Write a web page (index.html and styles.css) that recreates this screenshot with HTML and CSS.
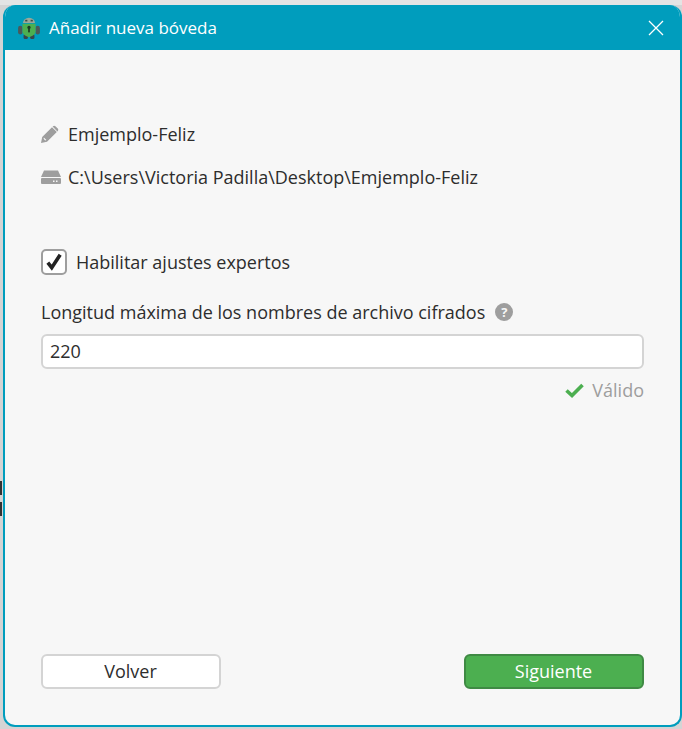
FILE: index.html
```html
<!DOCTYPE html>
<html lang="es">
<head>
  <meta charset="UTF-8" />
  <title>Añadir nueva bóveda</title>
  <link rel="stylesheet" href="styles.css">
</head>
<body>
  <div class="behind-a"></div>
  <div class="behind-b"></div>

  <div class="window">
    <div class="titlebar">
      <svg class="logo" width="24" height="24" viewBox="0 0 22 22">
        <rect x="1" y="9" width="4" height="8" rx="2" fill="#4a5a5a" />
        <rect x="17" y="9" width="4" height="8" rx="2" fill="#4a5a5a" />
        <rect x="6" y="17" width="4" height="4" rx="1" fill="#37474a" />
        <rect x="12" y="17" width="4" height="4" rx="1" fill="#37474a" />
        <path d="M5.500 6.500a5.500 5 0 0 1 11 0z" fill="#9aa89a" />
        <rect x="7.500" y="3.500" width="2" height="1.500" fill="#3d4d45" />
        <rect x="12.500" y="3.500" width="2" height="1.500" fill="#3d4d45" />
        <path d="M5 7h12v7c0 3-3 4.500-6 5.500-3-1-6-2.500-6-5.500z" fill="#4caf50" />
        <circle cx="11" cy="10.500" r="1.500" fill="#1d3b24" />
        <rect x="10.200" y="11" width="1.600" height="4" fill="#1d3b24" />
      </svg>
      <span class="title">Añadir nueva bóveda</span>
      <svg class="close" width="16" height="16" viewBox="0 0 16 16">
        <path d="M1 1l14 14M15 1L1 15" stroke="#fff" stroke-width="1.300" fill="none" />
      </svg>
    </div>

    <div class="content">
      <div class="info-row name-row">
        <svg width="18" height="18" viewBox="0 0 18 18">
          <path fill-rule="evenodd" d="M0 18l1.200-6L11 2.200 15.800 7 6 16.800z M2.600 13.800l1.600 1.600 1.200-.3-2.500-2.500z M12 1.200a1.800 1.800 0 0 1 2.400 0l2.400 2.400a1.800 1.800 0 0 1 0 2.400l-.4.4-4.800-4.800z" fill="#9e9e9e" />
        </svg>
        <span>Emjemplo-Feliz</span>
      </div>
      <div class="info-row path-row">
        <svg width="22" height="18" viewBox="1 0 22 18">
          <path d="M1 9l3-6.500h14l3 6.500z" fill="#9e9e9e" />
          <path fill-rule="evenodd" d="M2 10h18a1 1 0 0 1 1 1v4a1 1 0 0 1-1 1H2a1 1 0 0 1-1-1v-4a1 1 0 0 1 1-1z M13 12.500h1.500v1.500H13z M16 12.500h1.500v1.500H16z" fill="#9e9e9e" />
        </svg>
        <span>C:\Users\Victoria Padilla\Desktop\Emjemplo-Feliz</span>
      </div>

      <label class="expert">
        <span class="checkbox">
          <svg width="18" height="18" viewBox="0 0 16 16">
            <path d="M2.500 8.500l3.500 4.500 7.500-11.500" stroke="#222" stroke-width="3.200" fill="none" />
          </svg>
        </span>
        Habilitar ajustes expertos
      </label>

      <div class="field-label">
        <span>Longitud máxima de los nombres de archivo cifrados</span>
        <span class="help">?</span>
      </div>
      <input class="field" type="text" value="220">
      <div class="valid">
        <svg width="19" height="15" viewBox="0 0 19 15">
          <path d="M1.500 7.500l5.500 5 10.500-10.500" stroke="#4caf50" stroke-width="3.600" fill="none" />
        </svg>
        <span>Válido</span>
      </div>

      <div class="buttons">
        <button class="btn">Volver</button>
        <button class="btn primary">Siguiente</button>
      </div>
    </div>
  </div>
</body>
</html>
```

FILE: styles.css
```css
html, body {
  margin: 0;
  height: 100%;
}
body {
  box-sizing: border-box;
  padding: 5px 0 2px 3px;
  background: linear-gradient(#e4e4e4 0 5px, #d4d4d4 5px);
  font-family: "Open Sans", "Noto Sans", sans-serif;
  color: #2d2d2d;
  overflow: hidden;
  position: relative;
}
.behind-a,
.behind-b {
  position: absolute;
  left: 0;
  width: 2px;
  background: #333;
}
.behind-a {
  top: 481px;
  height: 14px;
}
.behind-b {
  top: 502px;
  height: 14px;
}
.window {
  position: relative;
  box-sizing: border-box;
  width: 679px;
  height: 722px;
  display: flex;
  flex-direction: column;
  border: 2px solid #009dbd;
  border-top: none;
  border-radius: 12px;
  background: #f7f7f7;
  overflow: hidden;
}
.titlebar {
  flex: none;
  height: 45px;
  margin: 0 -2px;
  padding: 0 18px 0 14px;
  background: #009dbd;
  color: #fff;
  display: flex;
  align-items: center;
}
.title {
  font-size: 17px;
  margin-left: 8px;
}
.close {
  margin-left: auto;
}
.content {
  flex: 1;
  display: flex;
  flex-direction: column;
  padding: 0 36px 36px;
  font-size: 18px;
}
.info-row {
  display: flex;
  align-items: center;
  height: 24px;
}
.info-row svg {
  flex: none;
}
.name-row {
  margin-top: 72px;
}
.name-row svg {
  margin-right: 9px;
}
.path-row {
  margin-top: 19px;
}
.path-row svg {
  margin-right: 5px;
}
.expert {
  display: flex;
  align-items: center;
  gap: 9px;
  margin-top: 60px;
  height: 26px;
}
.checkbox {
  box-sizing: border-box;
  width: 26px;
  height: 26px;
  border: 2px solid #9e9e9e;
  border-radius: 5px;
  background: #fff;
  display: flex;
  align-items: center;
  justify-content: center;
}
.field-label {
  display: flex;
  align-items: center;
  gap: 10px;
  margin-top: 25px;
  height: 24px;
}
.help {
  width: 18px;
  height: 18px;
  border-radius: 50%;
  background: #9e9e9e;
  color: #f7f7f7;
  font-size: 13px;
  font-weight: 700;
  line-height: 18px;
  text-align: center;
}
.field {
  box-sizing: border-box;
  width: 100%;
  height: 35px;
  margin-top: 10px;
  padding: 0 7px 2px;
  border: 2px solid #d4d4d4;
  border-radius: 6px;
  background: #fff;
  font: inherit;
  color: inherit;
}
.valid {
  display: flex;
  align-items: center;
  justify-content: flex-end;
  gap: 8px;
  margin-top: 9px;
  height: 24px;
  color: #9e9e9e;
}
.buttons {
  margin-top: auto;
  display: flex;
  justify-content: space-between;
}
.btn {
  box-sizing: border-box;
  width: 180px;
  height: 35px;
  padding: 0 1px 2px 0;
  border: 2px solid #d4d4d4;
  border-radius: 6px;
  background: #fff;
  font: inherit;
  color: inherit;
}
.primary {
  background: #4caf50;
  border-color: #3f8a44;
  color: #fff;
}
```
